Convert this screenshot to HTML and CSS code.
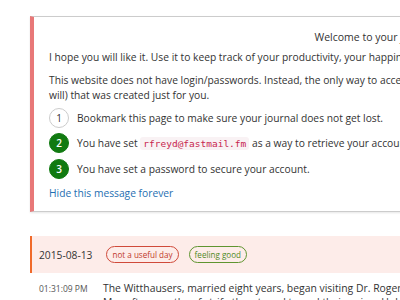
FILE: index.html
```html
<!DOCTYPE html>
<html>
<head>
<meta charset="utf-8">
<link rel="stylesheet" href="styles.css">
</head>
<body>
<div class="page">
  <div class="welcome">
    <h1 class="title">Welcome to your journal! So glad to have you here.</h1>
    <p class="para">I hope you will like it. Use it to keep track of your productivity, your happiness, and everything else you care about.</p>
    <p class="para">This website does not have login/passwords. Instead, the only way to access your journal is through its secret link (bookmark it, or not, as you<br>will) that was created just for you.</p>
    <ul class="steps">
      <li class="step"><span class="num">1</span><span>Bookmark this page to make sure your journal does not get lost.</span></li>
      <li class="step"><span class="num done">2</span><span>You have set <code class="code">rfreyd@fastmail.fm</code> as a way to retrieve your account.</span></li>
      <li class="step"><span class="num done">3</span><span>You have set a password to secure your account.</span></li>
    </ul>
    <a class="hide" href="#">Hide this message forever</a>
  </div>
  <div class="day">
    <span class="date">2015-08-13</span>
    <span class="badge bad">not a useful day</span>
    <span class="badge good">feeling good</span>
  </div>
  <div class="entry">
    <span class="time">01:31:09 PM</span>
    <p class="entry-text">The Witthausers, married eight years, began visiting Dr. Roger<br>May after months of strife threatened to end their union. Holding hands on the couch, they listened.</p>
  </div>
</div>
</body>
</html>
```
FILE: styles.css
```css
html, body {
  margin: 0;
  padding: 0;
  overflow: hidden;
  background: #fff;
}
body {
  font-family: "Open Sans", "DejaVu Sans", sans-serif;
  font-size: 10.25px;
  color: #333;
}
.page {
  padding: 16px 0 0 30px;
  width: 900px;
}
.welcome {
  width: 780px;
  border-top: 1px solid #ccc;
  border-bottom: 1px solid #ccc;
  border-right: 1px solid #ccc;
  border-left: 4px solid #e87878;
  padding: 10px 15px 10px 15px;
  box-shadow: 0 1px 2px rgba(0,0,0,0.1);
}
.title {
  margin: 0 0 3px;
  text-align: center;
  font-size: 10.5px;
  font-weight: normal;
  line-height: 20px;
}
.para {
  margin: 0 0 8px;
  line-height: 15px;
}
.para:last-of-type {
  margin-bottom: 2px;
}
.steps {
  list-style: none;
  margin: 0;
  padding: 0;
}
.step {
  display: flex;
  align-items: center;
  gap: 8px;
  height: 25.5px;
  white-space: nowrap;
}
.num {
  flex: none;
  width: 20px;
  height: 20px;
  border: 1px solid #ccc;
  border-radius: 50%;
  display: flex;
  align-items: center;
  justify-content: center;
  box-sizing: border-box;
  font-size: 10px;
}
.num.done {
  background: #117a11;
  border-color: #117a11;
  color: #fff;
  font-weight: 600;
}
.code {
  font-family: "DejaVu Sans Mono", monospace;
  font-size: 9.5px;
  color: #c7254e;
  background: #f9f2f4;
  border-radius: 3px;
  padding: 1px 3px;
}
.hide {
  display: block;
  margin-top: 4.5px;
  color: #1f6fb2;
  text-decoration: none;
  line-height: 15px;
}
.day {
  margin-top: 24px;
  height: 37px;
  background: #fdece9;
  border-left: 2px solid #f06a2a;
  display: flex;
  align-items: center;
  padding-left: 7px;
  gap: 10px;
}
.date {
  font-size: 10.25px;
  margin-right: 4px;
}
.badge {
  font-size: 8.1px;
  border: 1px solid;
  border-radius: 9px;
  padding: 1px 5px;
  line-height: 13px;
}
.bad {
  color: #c0392b;
  border-color: #d04a3a;
}
.good {
  color: #4f8a1f;
  border-color: #5f9530;
}
.entry {
  display: flex;
  align-items: baseline;
  padding-left: 9px;
  margin-top: 8px;
}
.time {
  font-size: 8.5px;
  color: #555;
  width: 64px;
  flex: none;
}
.entry-text {
  margin: 0;
  font-size: 10.4px;
  line-height: 14px;
  white-space: nowrap;
}
```
